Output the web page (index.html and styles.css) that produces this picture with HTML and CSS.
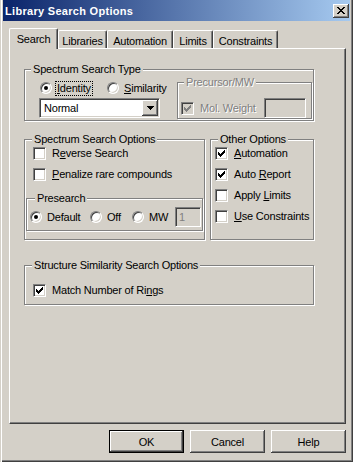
FILE: index.html
```html
<!DOCTYPE html>
<html>

<head>
    <title>Library Search Options</title>
    <link rel="stylesheet" href="styles.css">
</head>

<body>
    <div class="dialog">
        <div class="titlebar">
            <span class="title">Library Search Options</span>
            <span class="close-btn">
                <svg width="8" height="7" viewBox="0 0 8 7" shape-rendering="crispEdges">
                    <path d="M0 0h2v1h-2z M6 0h2v1h-2z M1 1h2v1h-2z M5 1h2v1h-2z M2 2h4v1h-4z M3 3h2v1h-2z M2 4h4v1h-4z M1 5h2v1h-2z M5 5h2v1h-2z M0 6h2v1h-2z M6 6h2v1h-2z" fill="#000"/>
                </svg>
            </span>
        </div>

        <div class="dialog-body">
            <div class="tabs">
                <div class="tab tab-search active">Search</div>
                <div class="tab tab-libraries">Libraries</div>
                <div class="tab tab-automation">Automation</div>
                <div class="tab tab-limits">Limits</div>
                <div class="tab tab-constraints">Constraints</div>
            </div>

            <div class="panel">
                <!-- tipo de busca + precursor -->
                <div class="group group-type">
                    <span class="group-title">Spectrum Search Type</span>
                    <div class="type-left">
                        <div class="radio-row">
                            <label class="radio-item item-identity">
                                <span class="radio checked"></span>
                                <span class="lbl focus"><u>I</u>dentity</span>
                            </label>
                            <label class="radio-item">
                                <span class="radio"></span>
                                <span class="lbl"><u>S</u>imilarity</span>
                            </label>
                        </div>
                        <div class="combo">
                            <span class="combo-text">Normal</span>
                            <span class="combo-btn">
                                <svg width="7" height="4" viewBox="0 0 7 4" shape-rendering="crispEdges">
                                    <path d="M0 0h7v1h-1v1h-1v1h-1v1h-1v-1h-1v-1h-1v-1h-1z" fill="#000"/>
                                </svg>
                            </span>
                        </div>
                    </div>
                    <div class="group group-precursor disabled">
                        <span class="group-title">Precursor/MW</span>
                        <div class="check-row">
                            <span class="check">
                                <svg width="7" height="7" viewBox="0 0 7 7" shape-rendering="crispEdges">
                                    <path d="M6 0h1v1h-1z M5 1h2v1h-2z M0 2h1v1h-1z M4 2h3v1h-3z M0 3h2v1h-2z M3 3h3v1h-3z M0 4h5v1h-5z M1 5h3v1h-3z M2 6h1v1h-1z" fill="#808080"/>
                                </svg>
                            </span>
                            <span class="lbl">Mol. Weight</span>
                            <span class="field field-mw"></span>
                        </div>
                    </div>
                </div>

                <div class="group-row">
                    <div class="group group-options">
                        <span class="group-title">Spectrum Search Options</span>
                        <label class="check-row">
                            <span class="check"></span>
                            <span class="lbl">R<u>e</u>verse Search</span>
                        </label>
                        <label class="check-row">
                            <span class="check"></span>
                            <span class="lbl"><u>P</u>enalize rare compounds</span>
                        </label>

                        <div class="group group-presearch">
                            <span class="group-title">Presearch</span>
                            <div class="radio-row">
                                <label class="radio-item item-default">
                                    <span class="radio checked"></span>
                                    <span class="lbl">Default</span>
                                </label>
                                <label class="radio-item item-off">
                                    <span class="radio"></span>
                                    <span class="lbl">Off</span>
                                </label>
                                <label class="radio-item item-mw">
                                    <span class="radio"></span>
                                    <span class="lbl">MW</span>
                                </label>
                                <span class="field field-presearch">1</span>
                            </div>
                        </div>
                    </div>

                    <div class="group group-other">
                        <span class="group-title">Other Options</span>
                        <label class="check-row">
                            <span class="check">
                                <svg width="7" height="7" viewBox="0 0 7 7" shape-rendering="crispEdges">
                                    <path d="M6 0h1v1h-1z M5 1h2v1h-2z M0 2h1v1h-1z M4 2h3v1h-3z M0 3h2v1h-2z M3 3h3v1h-3z M0 4h5v1h-5z M1 5h3v1h-3z M2 6h1v1h-1z" fill="#000"/>
                                </svg>
                            </span>
                            <span class="lbl"><u>A</u>utomation</span>
                        </label>
                        <label class="check-row">
                            <span class="check">
                                <svg width="7" height="7" viewBox="0 0 7 7" shape-rendering="crispEdges">
                                    <path d="M6 0h1v1h-1z M5 1h2v1h-2z M0 2h1v1h-1z M4 2h3v1h-3z M0 3h2v1h-2z M3 3h3v1h-3z M0 4h5v1h-5z M1 5h3v1h-3z M2 6h1v1h-1z" fill="#000"/>
                                </svg>
                            </span>
                            <span class="lbl">Auto <u>R</u>eport</span>
                        </label>
                        <label class="check-row">
                            <span class="check"></span>
                            <span class="lbl">Apply <u>L</u>imits</span>
                        </label>
                        <label class="check-row">
                            <span class="check"></span>
                            <span class="lbl"><u>U</u>se Constraints</span>
                        </label>
                    </div>
                </div>

                <div class="group group-structure">
                    <span class="group-title">Structure Similarity Search Options</span>
                    <label class="check-row">
                        <span class="check">
                            <svg width="7" height="7" viewBox="0 0 7 7" shape-rendering="crispEdges">
                                <path d="M6 0h1v1h-1z M5 1h2v1h-2z M0 2h1v1h-1z M4 2h3v1h-3z M0 3h2v1h-2z M3 3h3v1h-3z M0 4h5v1h-5z M1 5h3v1h-3z M2 6h1v1h-1z" fill="#000"/>
                            </svg>
                        </span>
                        <span class="lbl">Match Number of Ri<u>n</u>gs</span>
                    </label>
                </div>
            </div>

            <div class="buttons">
                <button class="btn default">OK</button>
                <button class="btn">Cancel</button>
                <button class="btn">Help</button>
            </div>
        </div>
    </div>
</body>

</html>
```

FILE: styles.css
```css
html,
body {
    margin: 0;
    background: #fff;
}

body {
    font-family: "Liberation Sans", Arial, sans-serif;
    font-size: 11px;
    letter-spacing: -0.2px;
    color: #000;
}

.dialog {
    box-sizing: border-box;
    width: 353px;
    height: 462px;
    padding: 0 3px 3px 3px;
    background: #d4d0c8;
    box-shadow: inset 1px 0 #d4d0c8, inset 2px 0 #fff, inset -1px -1px #404040, inset -2px -2px #808080;
}

/* barra de titulo */
.titlebar {
    display: flex;
    align-items: center;
    height: 21px;
    padding-left: 2px;
    background: linear-gradient(to right, #0a246a, #a6caf0);
}

.title {
    color: #fff;
    font-weight: bold;
    letter-spacing: 0.3px;
    line-height: 14px;
    padding-top: 1px;
}

.close-btn {
    display: flex;
    align-items: center;
    justify-content: center;
    box-sizing: border-box;
    width: 16px;
    height: 14px;
    margin-left: auto;
    margin-right: 1px;
    background: #d4d0c8;
    box-shadow: inset -1px -1px #404040, inset 1px 1px #fff, inset -2px -2px #808080;
}

.dialog-body {
    padding: 7px 0 0 6px;
}

/* abas */
.tabs {
    display: flex;
    align-items: flex-end;
    height: 20px;
}

.tab {
    box-sizing: border-box;
    height: 18px;
    padding-top: 4px;
    line-height: 13px;
    text-align: center;
    border-top: 1px solid #fff;
    border-left: 1px solid #fff;
    border-right: 1px solid #404040;
    border-radius: 2px 2px 0 0;
    box-shadow: inset -1px 0 #808080;
    background: #d4d0c8;
}

.tab.active {
    position: relative;
    z-index: 1;
    height: 21px;
    margin-bottom: -1px;
    padding-top: 4px;
}

.tab-search { width: 49px; }
.tab-libraries { width: 49px; }
.tab-automation { width: 66px; }
.tab-limits { width: 40px; }
.tab-constraints { width: 65px; }

.panel {
    box-sizing: border-box;
    width: 337px;
    height: 376px;
    padding: 20px 0 0 14px;
    border-top: 1px solid #fff;
    border-left: 1px solid #fff;
    border-right: 1px solid #404040;
    border-bottom: 1px solid #404040;
    box-shadow: inset -1px -1px #808080;
}

/* group boxes */
.group {
    position: relative;
    box-sizing: border-box;
    border: 1px solid #808080;
    box-shadow: inset 1px 1px #fff, 1px 1px #fff;
}

.group-title {
    position: absolute;
    top: -7px;
    left: 7px;
    padding: 0 2px;
    line-height: 13px;
    background: #d4d0c8;
    white-space: nowrap;
}

.group-type {
    display: flex;
    width: 290px;
    height: 52px;
    padding: 12px 1px 1px 15px;
}

.group-type .group-title {
    left: 6px;
}

.type-left {
    display: flex;
    flex-direction: column;
}

.group-precursor {
    width: 135px;
    margin-left: auto;
    padding: 15px 0 0 3px;
}

.group-precursor .check-row {
    height: 20px;
}

.group-row {
    display: flex;
    gap: 5px;
    margin-top: 18px;
}

.group-options {
    width: 181px;
    height: 101px;
    padding-top: 3px;
}

.group-options > .check-row {
    padding-left: 8px;
}

.group-presearch {
    width: 177px;
    height: 33px;
    margin: 13px 0 0 1px;
    padding: 8px 0 0 3px;
}

.group-presearch .group-title {
    left: 8px;
}

.group-other {
    width: 104px;
    height: 101px;
    padding: 3px 0 0 4px;
}

.group-structure {
    width: 290px;
    height: 40px;
    margin-top: 25px;
    padding: 14px 0 0 8px;
}

/* radios e checkboxes */
.radio-row {
    display: flex;
    align-items: center;
}

.type-left .radio-row {
    height: 12px;
}

.group-presearch .radio-row {
    height: 20px;
}

.radio-item {
    display: flex;
    align-items: center;
}

.item-identity { width: 67px; }
.item-default { width: 60px; }
.item-off { width: 42px; }
.item-mw { width: 43px; }

.radio {
    display: flex;
    align-items: center;
    justify-content: center;
    box-sizing: border-box;
    width: 12px;
    height: 12px;
    flex: none;
    border-radius: 50%;
    border: 1px solid;
    border-color: #808080 #fff #fff #808080;
    box-shadow: inset 1px 1px #404040, inset -1px -1px #d4d0c8;
    background: #fff;
}

.radio.checked::after {
    content: "";
    width: 4px;
    height: 4px;
    border-radius: 50%;
    background: #000;
}

.check-row {
    display: flex;
    align-items: center;
    height: 21px;
}

.check {
    display: flex;
    align-items: center;
    justify-content: center;
    box-sizing: border-box;
    width: 13px;
    height: 13px;
    flex: none;
    border: 1px solid;
    border-color: #808080 #fff #fff #808080;
    box-shadow: inset 1px 1px #404040, inset -1px -1px #d4d0c8;
    background: #fff;
}

.lbl {
    margin-left: 3px;
    padding: 0 1px;
    border: 1px solid transparent;
    line-height: 13px;
    white-space: nowrap;
}

.check + .lbl {
    margin-left: 4px;
}

.lbl.focus {
    border: 1px dotted #000;
}

.disabled .group-title,
.disabled .lbl {
    color: #808080;
    text-shadow: 1px 1px 0 #fff;
}

.disabled .check {
    background: #d4d0c8;
}

/* combo e campos */
.combo {
    display: flex;
    align-items: center;
    box-sizing: border-box;
    width: 121px;
    height: 20px;
    margin: 4px 0 0 -1px;
    padding: 1px;
    border: 1px solid;
    border-color: #808080 #fff #fff #808080;
    box-shadow: inset 1px 1px #404040, inset -1px -1px #d4d0c8;
    background: #fff;
}

.combo-text {
    padding-left: 3px;
    line-height: 13px;
}

.combo-btn {
    display: flex;
    align-items: center;
    justify-content: center;
    box-sizing: border-box;
    width: 16px;
    height: 16px;
    margin-left: auto;
    background: #d4d0c8;
    box-shadow: inset -1px -1px #404040, inset 1px 1px #fff, inset -2px -2px #808080;
}

.field {
    box-sizing: border-box;
    height: 20px;
    padding: 3px 0 0 3px;
    line-height: 13px;
    color: #808080;
    border: 1px solid;
    border-color: #808080 #fff #fff #808080;
    box-shadow: inset 1px 1px #404040, inset -1px -1px #d4d0c8;
    background: #d4d0c8;
}

.field-mw {
    width: 42px;
    margin: 0 5px 0 auto;
}

.field-presearch {
    width: 26px;
}

/* botoes */
.buttons {
    display: flex;
    justify-content: flex-end;
    gap: 6px;
    width: 337px;
    margin-top: 6px;
}

.btn {
    box-sizing: border-box;
    width: 75px;
    height: 23px;
    padding: 0;
    font-family: inherit;
    font-size: 11px;
    letter-spacing: -0.2px;
    color: #000;
    background: #d4d0c8;
    border: none;
    box-shadow: inset -1px -1px #404040, inset 1px 1px #fff, inset -2px -2px #808080;
}

.btn.default {
    border: 1px solid #000;
}
```
